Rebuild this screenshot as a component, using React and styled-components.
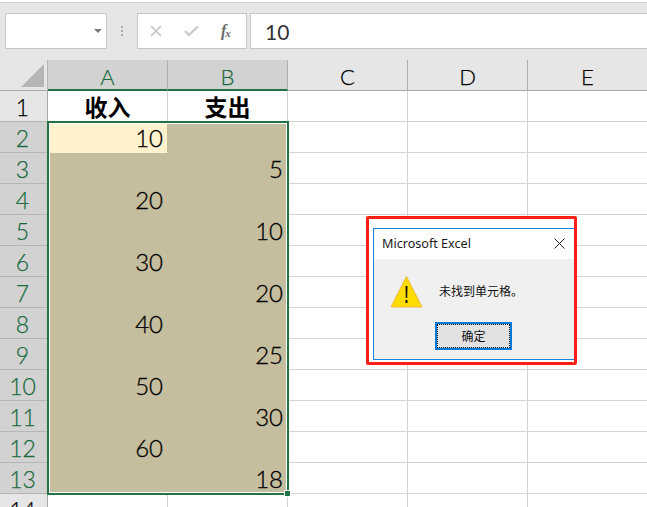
import React from "react";
import styled, { createGlobalStyle } from "styled-components";

const Global = createGlobalStyle`
  html, body { margin: 0; padding: 0; background: #fff; }
  body { width: 647px; height: 507px; overflow: hidden; font-family: "Lato", "Noto Sans CJK SC", sans-serif; }
`;

const Page = styled.div`
  position: relative;
  width: 647px;
  height: 507px;
  overflow: hidden;
`;

const Toolbar = styled.div`
  box-sizing: border-box;
  height: 60px;
  padding: 11px 0 11px 5px;
  display: flex;
  align-items: stretch;
  background: #e6e6e6;
  border-top: 2px solid #fff;
  box-shadow: inset 0 1px 0 #d2d2d2;
`;

const NameBox = styled.div`
  box-sizing: border-box;
  width: 102px;
  display: flex;
  align-items: center;
  justify-content: flex-end;
  padding-right: 4px;
  background: #fff;
  border: 1px solid #c6c6c6;
`;

const Caret = styled.span`
  width: 0;
  height: 0;
  border-left: 4px solid transparent;
  border-right: 4px solid transparent;
  border-top: 4px solid #7a7a7a;
`;

const Grip = styled.div`
  width: 30px;
  display: flex;
  flex-direction: column;
  align-items: center;
  justify-content: center;
  gap: 2px;
  & > i {
    width: 2px;
    height: 2px;
    background: #a8a8a8;
  }
`;

const FxBox = styled.div`
  box-sizing: border-box;
  width: 110px;
  display: flex;
  align-items: center;
  padding-left: 12px;
  gap: 19px;
  background: #fff;
  border: 1px solid #c6c6c6;
`;

const FxLabel = styled.span`
  font-family: "Liberation Serif", serif;
  font-style: italic;
  font-weight: bold;
  font-size: 16px;
  line-height: 16px;
  color: #6a6a6a;
  margin-left: 3px;
  letter-spacing: -1px;
  & sub {
    font-size: 11px;
    line-height: 0;
    vertical-align: -1px;
  }
`;

const FormulaInput = styled.div`
  box-sizing: border-box;
  flex: 1;
  margin-left: 3px;
  padding-left: 14px;
  display: flex;
  align-items: center;
  background: #fff;
  border: 1px solid #c6c6c6;
  border-right: none;
  font-size: 21px;
  color: #333;
`;

const Sheet = styled.div`
  display: grid;
  grid-template-columns: 48px repeat(5, 120px);
  grid-auto-rows: 31px;
  grid-template-rows: 31px;
  background: #fff;
`;

const Corner = styled.div`
  box-sizing: border-box;
  background: #e6e6e6;
  border-bottom: 1px solid #a9a9a9;
  border-right: 1px solid #b5b5b5;
  display: flex;
  align-items: flex-end;
  justify-content: flex-end;
  padding: 0 3px 3px 0;
`;

const ColHead = styled.div`
  box-sizing: border-box;
  display: flex;
  align-items: center;
  justify-content: center;
  padding-top: 3px;
  font-size: 22px;
  font-weight: 300;
  -webkit-text-stroke: 0.25px currentColor;
  color: ${(p) => (p.$on ? "#1a6b40" : "#000")};
  background: ${(p) => (p.$on ? "#d2d2d2" : "#e6e6e6")};
  border-right: 1px solid #aeaeae;
  border-bottom: ${(p) => (p.$on ? "2px solid #217346" : "1px solid #a9a9a9")};
`;

const RowHead = styled.div`
  box-sizing: border-box;
  display: flex;
  align-items: center;
  justify-content: center;
  padding: 2px 2px 0 0;
  font-size: 23px;
  font-weight: 300;
  -webkit-text-stroke: 0.25px currentColor;
  color: ${(p) => (p.$on ? "#1a6b40" : "#000")};
  background: ${(p) => (p.$on ? "#d2d2d2" : "#e6e6e6")};
  border-right: 1px solid #a9a9a9;
  border-bottom: 1px solid #b5b5b5;
`;

const Cell = styled.div`
  box-sizing: border-box;
  display: flex;
  align-items: flex-end;
  justify-content: flex-end;
  padding: 0 4px 0 0;
  font-size: 24px;
  line-height: 29px;
  font-weight: 300;
  font-family: "Lato", sans-serif;
  -webkit-text-stroke: 0.3px #000;
  color: #000;
  background: ${(p) => (p.$active ? "#fff2cc" : p.$fill ? "#c4bd9e" : "#fff")};
  border-right: 1px solid ${(p) => (p.$fill || p.$active ? "#c4bd9e" : "#d4d4d4")};
  border-bottom: 1px solid ${(p) => (p.$fill ? "#c4bd9e" : p.$active ? "#fff2cc" : "#d4d4d4")};
`;

const TitleCell = styled.div`
  box-sizing: border-box;
  display: flex;
  align-items: flex-end;
  justify-content: center;
  font-family: "Noto Sans CJK SC", sans-serif;
  font-size: 23px;
  line-height: 29px;
  font-weight: 700;
  color: #000;
  border-right: 1px solid #d4d4d4;
  border-bottom: 1px solid #d4d4d4;
`;

const Selection = styled.div`
  position: absolute;
  box-sizing: border-box;
  left: 47px;
  top: 121px;
  width: 242px;
  height: 374px;
  border: 2px solid #217346;
  outline: 1px solid #fff;
  outline-offset: -3px;
  pointer-events: none;
`;

const Handle = styled.div`
  position: absolute;
  right: -4px;
  bottom: -4px;
  width: 5px;
  height: 5px;
  background: #217346;
  border: 1px solid #fff;
`;

const Callout = styled.div`
  position: absolute;
  box-sizing: border-box;
  left: 366px;
  top: 216px;
  width: 211px;
  height: 149px;
  padding: 9px 0 0 4px;
  background: #fff;
  border: 3px solid #ff2015;
  border-radius: 2px;
  overflow: hidden;
`;

const Dialog = styled.div`
  box-sizing: border-box;
  width: 212px;
  height: 132px;
  display: flex;
  flex-direction: column;
  background: #f0f0f0;
  border: 1px solid #1883d7;
`;

const DialogTitle = styled.div`
  height: 30px;
  flex: none;
  box-sizing: border-box;
  display: flex;
  align-items: center;
  justify-content: space-between;
  padding: 0 19px 2px 8px;
  background: #fff;
  font-family: "Noto Sans", sans-serif;
  font-size: 12.6px;
  color: #1a1a1a;
`;

const DialogBody = styled.div`
  display: flex;
  align-items: center;
  gap: 16px;
  padding: 16px 0 0 16px;
  font-family: "Noto Sans CJK SC", sans-serif;
  font-size: 12px;
  color: #111;
  & > span {
    margin-top: -3px;
  }
`;

const DialogFoot = styled.div`
  display: flex;
  padding: 14px 0 0 61px;
`;

const OkButton = styled.button`
  box-sizing: border-box;
  width: 77px;
  height: 28px;
  padding: 0 0 2px;
  background: #e1e1e1;
  border: 2px solid #0078d7;
  outline: 1px dotted #111;
  outline-offset: -3px;
  font-family: "Noto Sans CJK SC", sans-serif;
  font-size: 12px;
  color: #111;
`;

const rows = [
  ["10", ""], ["", "5"], ["20", ""], ["", "10"], ["30", ""], ["", "20"],
  ["40", ""], ["", "25"], ["50", ""], ["", "30"], ["60", ""], ["", "18"],
];

export default function App() {
  return (
    <Page>
      <Global />
      <Toolbar>
        <NameBox><Caret /></NameBox>
        <Grip><i /><i /><i /></Grip>
        <FxBox>
          <svg width="12" height="12" viewBox="0 0 12 12"><path d="M1 1l10 10M11 1L1 11" stroke="#c4c4c4" strokeWidth="1.6" fill="none" /></svg>
          <svg width="15" height="12" viewBox="0 0 15 12" style={{ marginLeft: 3 }}><path d="M1 6l4 4 9-8.5" stroke="#c8c8c8" strokeWidth="2.2" fill="none" /></svg>
          <FxLabel>f<sub>x</sub></FxLabel>
        </FxBox>
        <FormulaInput>10</FormulaInput>
      </Toolbar>
      <Sheet>
        <Corner>
          <svg width="23" height="23" viewBox="0 0 23 23"><path d="M23 0v23H0z" fill="#b5b5b5" /></svg>
        </Corner>
        {["A", "B", "C", "D", "E"].map((c, i) => (
          <ColHead key={c} $on={i < 2}>{c}</ColHead>
        ))}
        <RowHead>1</RowHead>
        <TitleCell>收入</TitleCell>
        <TitleCell>支出</TitleCell>
        <Cell /><Cell /><Cell />
        {rows.map((r, i) => (
          <React.Fragment key={i}>
            <RowHead $on>{i + 2}</RowHead>
            <Cell $fill={i > 0} $active={i === 0}>{r[0]}</Cell>
            <Cell $fill>{r[1]}</Cell>
            <Cell /><Cell /><Cell />
          </React.Fragment>
        ))}
        <RowHead>14</RowHead>
        <Cell /><Cell /><Cell /><Cell /><Cell />
      </Sheet>
      <Selection><Handle /></Selection>
      <Callout>
        <Dialog>
          <DialogTitle>
            <span>Microsoft Excel</span>
            <svg width="11" height="11" viewBox="0 0 11 11"><path d="M.5.5l10 10M10.5.5l-10 10" stroke="#222" strokeWidth="1" fill="none" /></svg>
          </DialogTitle>
          <DialogBody>
            <svg width="33" height="33" viewBox="0 0 33 33">
              <path d="M16.5 1.5L32 32H1z" fill="#ffdc00" stroke="#f0b93a" strokeWidth="1" strokeLinejoin="round" />
              <path d="M15.5 11h2l-.3 12h-1.4zM15.5 25h2v3h-2z" fill="#111" />
            </svg>
            <span>未找到单元格。</span>
          </DialogBody>
          <DialogFoot>
            <OkButton>确定</OkButton>
          </DialogFoot>
        </Dialog>
      </Callout>
    </Page>
  );
}
